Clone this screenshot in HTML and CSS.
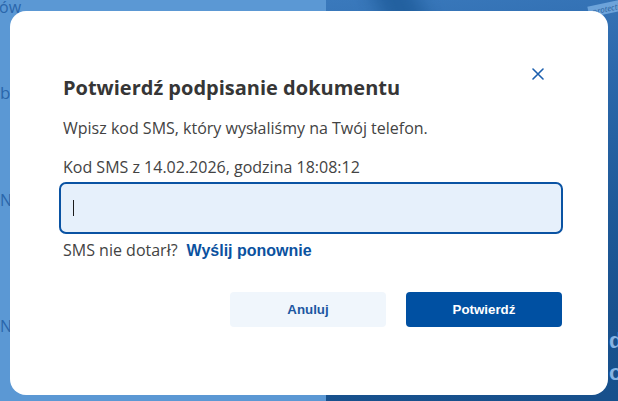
FILE: index.html
```html
<!DOCTYPE html>
<html lang="pl">
<head>
<meta charset="utf-8">
<title>Potwierdź podpisanie dokumentu</title>
<link rel="stylesheet" href="styles.css">
</head>
<body>
<div class="page">
  <aside class="page-left">
    <p class="bg-word bg-w1">ów</p>
    <p class="bg-word bg-w2">bankowość</p>
    <p class="bg-word bg-w3">Nowości</p>
    <p class="bg-word bg-w4">Najczęstsze pytania</p>
  </aside>
  <section class="page-right">
    <span class="hero-tag">protection</span>
    <div class="hero-text"><span>dla</span><span>od</span></div>
  </section>
</div>
<div class="overlay">
  <div class="modal" role="dialog" aria-labelledby="mt">
    <button class="modal-close" aria-label="Zamknij">
      <svg width="12" height="12" viewBox="0 0 12 12"><path d="M1 1L11 11M11 1L1 11" stroke="#1c5fae" stroke-width="1.6" stroke-linecap="round" fill="none"/></svg>
    </button>
    <h2 class="modal-title" id="mt">Potwierdź podpisanie dokumentu</h2>
    <p class="modal-desc">Wpisz kod SMS, który wysłaliśmy na Twój telefon.</p>
    <label class="field-label">Kod SMS z 14.02.2026, godzina 18:08:12</label>
    <div class="field"><span class="caret"></span></div>
    <p class="resend">SMS nie dotarł?<a class="resend-link" href="#">Wyślij ponownie</a></p>
    <div class="actions">
      <button class="btn btn-secondary">Anuluj</button>
      <button class="btn btn-primary">Potwierdź</button>
    </div>
  </div>
</div>
</body>
</html>
```
FILE: styles.css
```css
* { box-sizing: border-box; }
html, body { margin: 0; padding: 0; }
body {
  width: 618px;
  height: 401px;
  overflow: hidden;
  font-family: "Open Sans", "Liberation Sans", sans-serif;
}
.page {
  display: grid;
  grid-template-columns: 326px 1fr;
  height: 401px;
}
.page-left {
  background: #5b98d4;
  overflow: hidden;
  display: flex;
  flex-direction: column;
}
.bg-word {
  margin: 0;
  font-size: 16px;
  line-height: 20px;
  color: #2a66ab;
  white-space: nowrap;
}
.bg-w1 { margin-top: -3px; margin-left: -1px; }
.bg-w2 { margin-top: 66px; font-size: 17px; }
.bg-w3 { margin-top: 87px; }
.bg-w4 { margin-top: 106px; }
.page-right {
  background: linear-gradient(172deg, #3a79bc 0%, #2b68ab 25%, #1f5a99 55%, #18518e 80%, #17508c 100%);
  overflow: hidden;
  display: flex;
  flex-direction: column;
  position: relative;
}
.page-right::before {
  content: "";
  position: absolute;
  left: 60px;
  top: -40px;
  width: 40px;
  height: 120px;
  background: #22609f;
  filter: blur(10px);
  transform: rotate(-25deg);
}
.hero-tag {
  align-self: flex-end;
  margin: 2px -14px 0 0;
  font-size: 8px;
  font-style: italic;
  color: #2a5f9c;
  background: #6ca3da;
  padding: 0 4px;
  transform: rotate(-12deg);
  position: relative;
}
.hero-text {
  margin-top: auto;
  margin-bottom: 12px;
  padding-left: 283px;
  display: flex;
  flex-direction: column;
  font-family: "Liberation Sans", sans-serif;
  font-weight: 700;
  font-size: 22px;
  line-height: 32px;
  color: #86b3e3;
  white-space: nowrap;
}
.overlay {
  position: fixed;
  inset: 0;
  display: flex;
  padding: 11px 10px 6px 10px;
}
.modal {
  flex: 1;
  background: #fff;
  border-radius: 16px;
  padding: 63px 46px 0 53px;
  position: relative;
  display: flex;
  flex-direction: column;
}
.modal-close {
  position: absolute;
  left: 522px;
  top: 57px;
  width: 12px;
  height: 12px;
  padding: 0;
  border: 0;
  background: none;
  display: flex;
}
.modal-title {
  margin: 0;
  font-size: 20px;
  line-height: 28px;
  font-weight: 700;
  color: #363636;
}
.modal-desc {
  margin: 14px 0 0;
  font-size: 16px;
  line-height: 24px;
  color: #434343;
}
.field-label {
  display: block;
  margin-top: 15px;
  font-size: 16px;
  line-height: 24px;
  color: #434343;
}
.field {
  margin: 3px -1px 0 -4px;
  height: 52px;
  border: 2px solid #0a53a3;
  border-radius: 7px;
  background: #e6f0fb;
  display: flex;
  align-items: center;
  padding-left: 12px;
}
.caret {
  width: 1px;
  height: 16px;
  background: #1b1b1b;
}
.resend {
  margin: 4px 0 0;
  font-size: 16px;
  line-height: 24px;
  color: #434343;
  display: flex;
  align-items: baseline;
}
.resend-link {
  margin-left: 9px;
  font-family: "Liberation Sans", Arial, sans-serif;
  font-weight: 700;
  color: #0b52a0;
  text-decoration: none;
}
.actions {
  margin-top: 29px;
  display: flex;
  justify-content: flex-end;
  gap: 20px;
}
.btn {
  width: 156px;
  height: 35px;
  border: 0;
  border-radius: 4px;
  font-family: "Liberation Sans", Arial, sans-serif;
  font-weight: 700;
  font-size: 13.3px;
  padding: 0;
}
.btn-secondary {
  background: #f0f6fc;
  color: #1d58a2;
}
.btn-primary {
  background: #0050a2;
  color: #fff;
}
```
